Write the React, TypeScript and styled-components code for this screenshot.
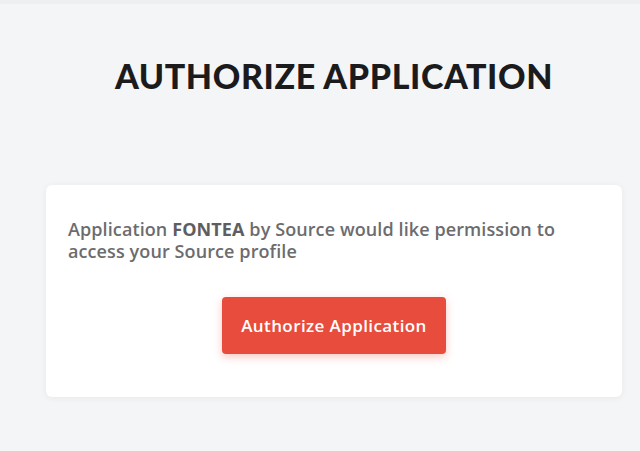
import React from "react";
import styled, { createGlobalStyle } from "styled-components";

const GlobalStyle = createGlobalStyle`
  html, body {
    margin: 0;
    padding: 0;
    background: #f4f5f7;
    font-family: "Open Sans", "Noto Sans", sans-serif;
  }
`;

const Page = styled.div`
  min-height: 451px;
  box-sizing: border-box;
  border-top: 4px solid #eeeff1;
  padding: 0 18px 0 46px;
`;

const Title = styled.h1`
  margin: 0;
  padding-top: 52px;
  height: 131px;
  box-sizing: border-box;
  text-align: center;
  font-family: Lato, "Open Sans", sans-serif;
  font-size: 34px;
  font-weight: 900;
  letter-spacing: 0.6px;
  color: #1b1b1d;
  line-height: 40px;
`;

const Card = styled.div`
  margin-top: 50px;
  background: #ffffff;
  border-radius: 6px;
  box-shadow: 0 1px 6px rgba(0, 0, 0, 0.06);
  padding: 33px 22px 0;
  height: 212px;
  box-sizing: border-box;
`;

const Message = styled.p`
  margin: 0;
  font-size: 18px;
  line-height: 22px;
  font-weight: 600;
  letter-spacing: 0.1px;
  color: #6c6c6e;

  b {
    color: #5e5e60;
    font-weight: 700;
  }
`;

const Actions = styled.div`
  display: flex;
  justify-content: center;
  margin-top: 35px;
`;

const AuthorizeButton = styled.button`
  width: 224px;
  height: 57px;
  border: none;
  border-radius: 4px;
  background: #e84c3d;
  color: #ffffff;
  font-family: inherit;
  font-size: 17px;
  font-weight: 600;
  letter-spacing: 0.4px;
  box-shadow: 0 3px 8px rgba(232, 76, 61, 0.3);
  cursor: pointer;
`;

export default function App() {
  return (
    <>
      <GlobalStyle />
      <Page>
        <Title>AUTHORIZE APPLICATION</Title>
        <Card>
          <Message>
            Application <b>FONTEA</b> by Source would like permission to access your
            Source profile
          </Message>
          <Actions>
            <AuthorizeButton>Authorize Application</AuthorizeButton>
          </Actions>
        </Card>
      </Page>
    </>
  );
}
